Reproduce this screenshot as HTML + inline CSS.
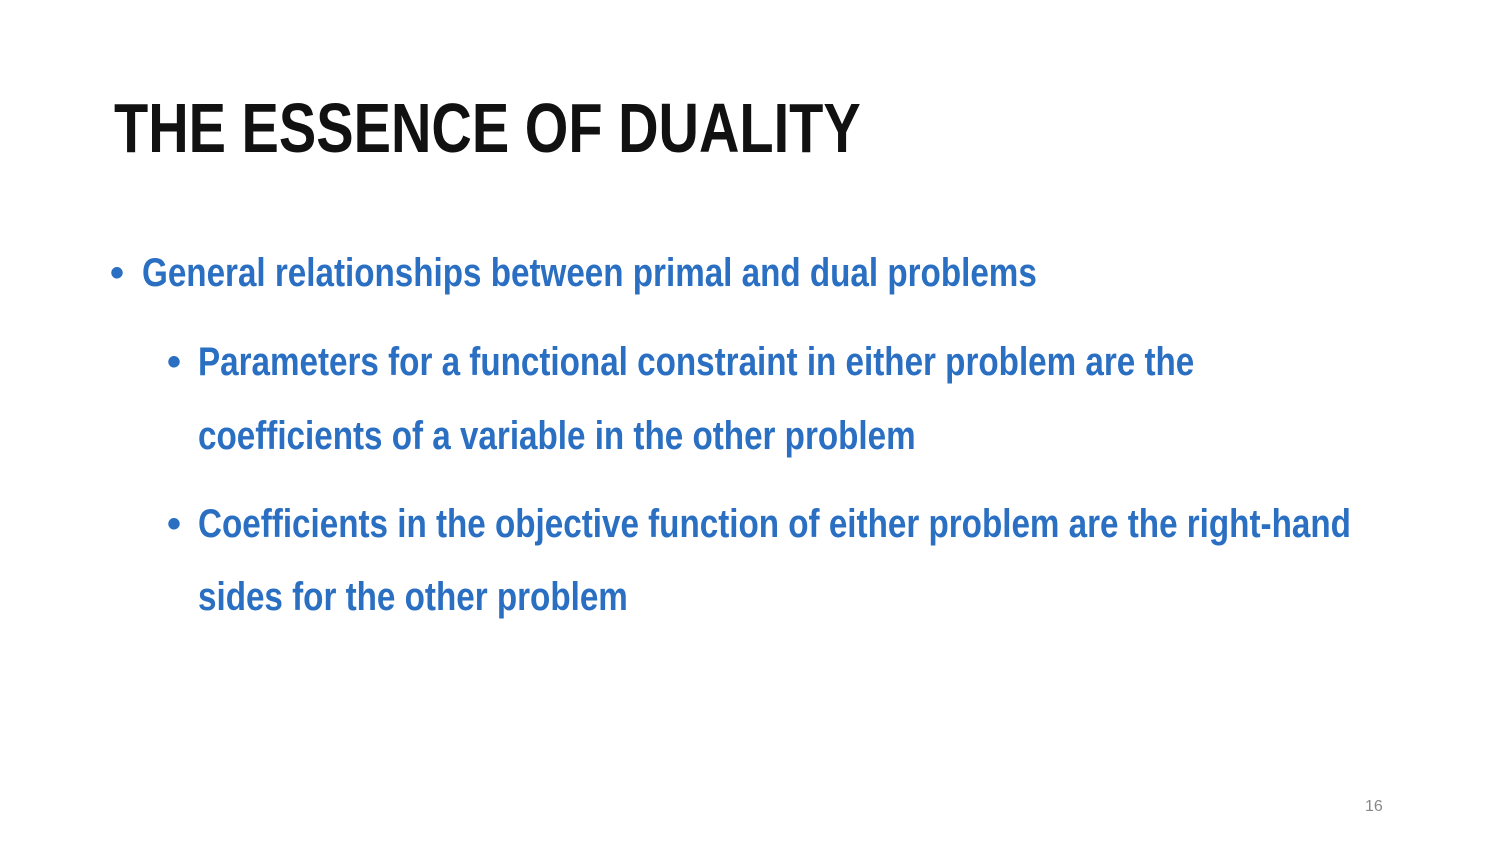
<!DOCTYPE html>
<html><head><meta charset="utf-8"><style>
body{margin:0;width:1500px;height:844px;background:#fff;overflow:hidden;position:relative;font-family:"Liberation Sans",Arial,sans-serif;}
.a{position:absolute;white-space:nowrap;line-height:1;font-weight:bold;transform-origin:0 0;}
.t{font-size:70px;color:#111;transform:scaleX(0.80);}
.b{font-size:40px;color:#2a6fc2;transform:scaleX(0.83);}
.d{position:absolute;font-size:40px;line-height:1;color:#2a6fc2;font-weight:bold;}
</style></head><body>
<div class="a t" style="left:114px;top:93px">THE ESSENCE OF DUALITY</div>
<div class="d" style="left:110px;top:253px">•</div>
<div class="a b" style="left:142px;top:253px">General relationships between primal and dual problems</div>
<div class="d" style="left:167px;top:342px">•</div>
<div class="a b" style="left:198px;top:342px">Parameters for a functional constraint in either problem are the</div>
<div class="a b" style="left:198px;top:416px">coefficients of a variable in the other problem</div>
<div class="d" style="left:167px;top:504px">•</div>
<div class="a b" style="left:198px;top:504px">Coefficients in the objective function of either problem are the right-hand</div>
<div class="a b" style="left:198px;top:577px">sides for the other problem</div>
<div class="a" style="left:1365px;top:799px;font-size:16px;font-weight:normal;color:#888">16</div>
</body></html>
